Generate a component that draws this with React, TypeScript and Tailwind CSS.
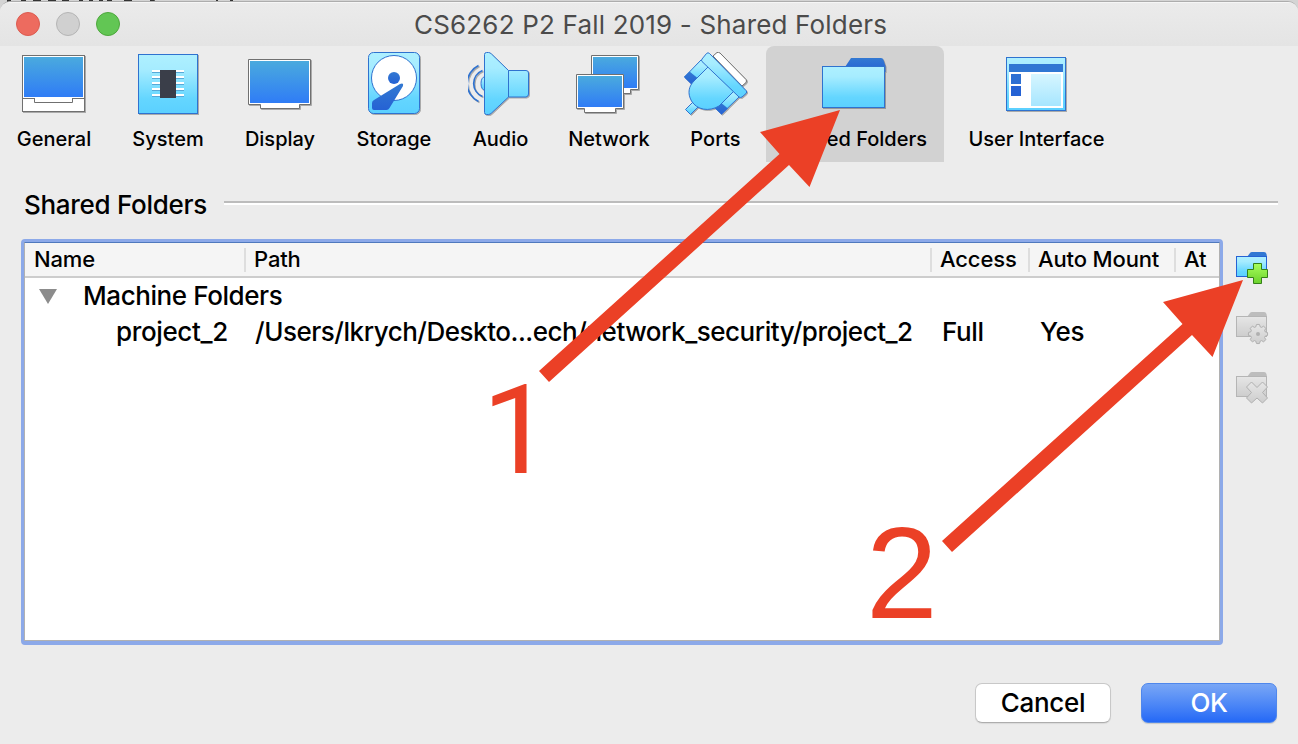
import React from "react";

type P = { children?: React.ReactNode };

const Defs = () => (
  <svg className="absolute h-0 w-0">
    <defs>
      <linearGradient id="screen" x1="0" y1="0" x2="0" y2="1">
        <stop offset="0" stopColor="#4aaade" />
        <stop offset="1" stopColor="#2f7cf6" />
      </linearGradient>
      <linearGradient id="cyan" x1="0" y1="0" x2="0" y2="1">
        <stop offset="0" stopColor="#aef0ff" />
        <stop offset="0.25" stopColor="#a6ecff" />
        <stop offset="0.75" stopColor="#64d6ff" />
        <stop offset="1" stopColor="#5bd0ff" />
      </linearGradient>
      <linearGradient id="blue" x1="0" y1="0" x2="0" y2="1">
        <stop offset="0" stopColor="#3379d2" />
        <stop offset="1" stopColor="#2562d4" />
      </linearGradient>
      <linearGradient id="pale" x1="0" y1="0" x2="0" y2="1">
        <stop offset="0" stopColor="#d6f6ff" />
        <stop offset="1" stopColor="#a6e6ff" />
      </linearGradient>
      <linearGradient id="green" x1="0" y1="0" x2="0" y2="1">
        <stop offset="0" stopColor="#a8ff5c" />
        <stop offset="1" stopColor="#6bd12c" />
      </linearGradient>
      <linearGradient id="gray" x1="0" y1="0" x2="0" y2="1">
        <stop offset="0" stopColor="#e6e6e6" />
        <stop offset="1" stopColor="#cdcdcd" />
      </linearGradient>
    </defs>
  </svg>
);

const Icon = ({ children, left }: P & { left?: boolean }) => (
  <svg
    width="66"
    height="66"
    viewBox="0 0 66 66"
    className={`shrink-0 drop-shadow-[1px_1px_0_rgba(0,0,0,0.28)] ${left ? "mr-0" : "-mr-0.5"}`}
  >
    {children}
  </svg>
);

const General = () => (
  <Icon>
    <rect x="0.5" y="3.5" width="62" height="56" fill="#fff" stroke="#707070" />
    <rect x="2" y="5" width="59" height="40" fill="url(#screen)" />
    <path d="M0.5 46.5h62M12.5 46.5v4h38v-4" fill="none" stroke="#707070" />
    <path d="M13 46.5h37" stroke="#fff" />
  </Icon>
);
const System = () => (
  <Icon>
    <rect x="2.5" y="2.5" width="59" height="59" fill="url(#cyan)" stroke="#2f72cf" />
    {[18, 24, 30, 36, 42].map((y) => (
      <g key={y}>
        <rect x="16" y={y} width="32" height="2" fill="#fff" />
        <rect x="16" y={y + 2} width="32" height="1" fill="#57a9d8" />
      </g>
    ))}
    <rect x="24" y="18" width="16" height="28" fill="#3a3e49" />
  </Icon>
);
const Display = () => (
  <Icon>
    <path d="M0.5 7.5h62v45h-11v4h-39v-4h-12z" fill="#fff" stroke="#707070" />
    <rect x="2" y="9" width="59" height="42" fill="url(#screen)" />
  </Icon>
);
const Storage = () => (
  <Icon>
    <rect x="6.5" y="0.5" width="51" height="61" rx="5" fill="url(#cyan)" stroke="#2f72cf" />
    <circle cx="32" cy="26" r="22.5" fill="#fff" stroke="#2f72cf" />
    <circle cx="32" cy="26" r="6" fill="url(#blue)" />
    <path d="M38 32q4-1.500 3 2L27.500 56q-1 2-3 2H12q-2 0-2-2v-5q0-2 2-3z" fill="url(#blue)" />
  </Icon>
);
const Audio = () => (
  <Icon left>
    <path d="M10.500 13.500a20 20 0 0 0 0 36M14.500 18.500a14 14 0 0 0 0 26" fill="none" stroke="#2f72cf" strokeWidth="1.700" />
    <path d="M17 24.500q-4 1-4 7t4 7" fill="url(#cyan)" stroke="#2f72cf" />
    <path d="M16.500 2.500q0-2 2-2h2q1.500 0 3 1.500L40.500 18.500H58q2.500 0 2.500 2.500v21q0 2.500-2.500 3H40.500L23.500 61q-1.500 1.500-3 1.500h-2q-2 0-2-2z" fill="url(#cyan)" stroke="#2f72cf" />
    <path d="M40.500 18.500v26.500" stroke="#2f72cf" />
  </Icon>
);
const Network = () => (
  <Icon left>
    <path d="M15.500 3.500h47v34h-8v4H23v-4h-7.500z" fill="#fff" stroke="#707070" />
    <rect x="17" y="5" width="44" height="31" fill="url(#screen)" />
    <path d="M0.500 22.500h47v34h-8v4h-31v-4h-8z" fill="#fff" stroke="#707070" />
    <rect x="2" y="24" width="44" height="31" fill="url(#screen)" />
  </Icon>
);
const Ports = () => (
  <Icon>
    <path d="M29 4l4-3.500q1.500-.500 3 .500L62 27.500q1 1.500 0 3L58 34z" fill="#fff" stroke="#707070" />
    <path d="M1.500 57.500l8-8 5 5-8 8z" fill="url(#cyan)" stroke="#2f72cf" />
    <path d="M0.500 25L17 8l9 7-17 18z" fill="url(#cyan)" stroke="#2f72cf" />
    <path d="M0 25l5.500-5.500 8 6.500-6 6.500z" fill="url(#blue)" />
    <path d="M30 55l18-18 7 8-17.500 17z" fill="url(#cyan)" stroke="#2f72cf" />
    <path d="M30 55l6-5 8 6.500-6.500 6z" fill="url(#blue)" />
    <path d="M24.500 14.500L49.500 39.500 35 54C25 60 13 58 7.500 49 3 41 5 34 10 29z" fill="url(#cyan)" stroke="#2f72cf" />
    <path d="M18 7l4.500-5.500q1.500-1.500 3 0L62 38.500q1.500 1.500 0 3L58 45q-1.500 1-3 0L18 9.500q-1-1 0-2.500z" fill="url(#cyan)" stroke="#2f72cf" />
  </Icon>
);
const Shared = () => (
  <Icon left>
    <path d="M23 15l6-9h30q2 0 2.500 2l2 6v6z" fill="url(#blue)" />
    <rect x="0.500" y="14.500" width="62" height="41" fill="url(#cyan)" stroke="#2f72cf" />
  </Icon>
);
const UserInterface = () => (
  <Icon left>
    <rect x="2.500" y="5.500" width="59" height="53" fill="url(#cyan)" stroke="#2f72cf" />
    <rect x="5" y="20" width="54" height="36" fill="#fff" />
    <rect x="5" y="12" width="54" height="8" fill="#3077d3" />
    <rect x="7" y="22" width="10" height="10" fill="#2d6fd3" />
    <rect x="7" y="34" width="10" height="10" fill="#2562d4" />
    <rect x="27" y="22" width="30" height="32" fill="url(#pale)" />
  </Icon>
);

const tools = [
  { label: "General", icon: <General />, box: "w-[106px]" },
  { label: "System", icon: <System />, box: "w-[104px]" },
  { label: "Display", icon: <Display />, box: "w-[102px]" },
  { label: "Storage", icon: <Storage />, box: "w-[108px]" },
  { label: "Audio", icon: <Audio />, box: "w-[87px]" },
  { label: "Network", icon: <Network />, box: "w-[112px]" },
  { label: "Ports", icon: <Ports />, box: "w-[83px]" },
  { label: "Shared Folders", icon: <Shared />, box: "w-[178px] rounded-t-lg bg-[#d2d2d2]" },
  { label: "User Interface", icon: <UserInterface />, box: "w-[167px]" },
];

const SmallFolder = ({ on, children }: P & { on?: boolean }) => (
  <svg width="34" height="34" viewBox="0 0 34 34">
    <path d="M11 5l3-4q.500-1 2-1h12q2 0 2.500 2l.500 3v3H11z" fill={on ? "#3178d3" : "#bdbdbd"} />
    <rect x="0.500" y="4.500" width="30" height="20" fill={on ? "url(#cyan)" : "url(#gray)"} stroke={on ? "#2562d4" : "#b5b5b5"} />
    {children}
  </svg>
);

const gearPath = Array.from({ length: 40 }, (_, i) => {
  const a = (i / 40) * Math.PI * 2;
  const r = i % 5 === 0 || i % 5 === 1 || i % 5 === 4 ? 9.6 : 7.4;
  return `${i ? "L" : "M"}${22 + r * Math.cos(a)} ${22 + r * Math.sin(a)}`;
}).join("") + "Z";

export default function App() {
  return (
    <div className="relative h-[744px] w-[1298px] overflow-hidden bg-[#d4d4d4] pt-px font-['Inter','Liberation_Sans',sans-serif] text-black">
      <Defs />
      <svg className="absolute left-0 top-0" width="290" height="3">
        <path d="M7 0h4v2H7zM21 0h5v2h-5zM33 0h8v2h-8zM48 0h8v2h-8zM62 0h7v2h-7zM79 0h4v2h-4zM89 0h4v2h-4zM99 0h4v2h-4zM107 0h5v2h-5zM124 0h8v1h-3v1h-5zM150 0h5l-1 2h-4zM216 0h2v1h-2zM230 0h3v1h-3z" fill="#333" />
      </svg>
      <div className="relative flex h-[743px] flex-col overflow-hidden rounded-t-[10px] border-t border-[#adadad] bg-[#ececec]">
        <header className="flex h-11 shrink-0 items-center border-t border-[#f6f6f6] bg-linear-to-b from-[#ebebeb] to-[#e4e4e4] pl-4">
          <div className="-mt-px flex gap-4">
            <i className="size-6 rounded-full border border-[#dc5b50] bg-[#ed6b5f]" />
            <i className="size-6 rounded-full border border-[#b5b5b5] bg-[#d0d0d0]" />
            <i className="size-6 rounded-full border border-[#4da73c] bg-[#62c654]" />
          </div>
          <h1 className="ml-[294px] whitespace-nowrap text-[26px] leading-8 tracking-[0.18px] text-[#4b4b4b]">CS6262 P2 Fall 2019 - Shared Folders</h1>
        </header>
        <nav className="flex h-[116px] shrink-0 gap-[9px] pl-px">
          {tools.map((t) => (
            <div key={t.label} className={`flex shrink-0 flex-col items-center pt-1.5 ${t.box}`}>
              {t.icon}
              <span className="mt-[9px] whitespace-nowrap text-[20px] font-[540] leading-6">{t.label}</span>
            </div>
          ))}
        </nav>
        <div className="mt-[23px] flex h-10 shrink-0 items-center pl-6 pr-5">
          <h2 className="w-[200px] whitespace-nowrap text-[26px] font-[450] leading-8 tracking-[-0.3px]">Shared Folders</h2>
          <div className="-mt-1 h-1 flex-1 border-b-2 border-t-2 border-b-white border-t-[#bcbcbc]" />
        </div>
        <main className="mt-[14px] flex h-[406px] shrink-0 pl-[21px]">
          <section className="w-[1202px] shrink-0 rounded-[4px] border-[3px] border-b-4 border-[#8ca9e9] bg-white">
            <div className="h-full border border-[#b1b1b1] border-t-[#4f79bd]">
              <div className="flex h-[35px] items-center border-b-2 border-[#cdcdcd] bg-[#f5f5f5] text-[22px] font-[450] leading-6 tracking-[-0.14px]">
                <div className="w-[219px] whitespace-nowrap pb-0.5 pl-[9px]">Name</div>
                <div className="flex h-6 w-[686px] items-center border-l-2 border-[#dedede] pb-0.5 pl-2">Path</div>
                <div className="flex h-6 w-[98px] items-center border-l-2 border-[#dedede] pb-0.5 pl-2">Access</div>
                <div className="flex h-6 w-[146px] items-center whitespace-nowrap border-l-2 border-[#dedede] pb-0.5 pl-2">Auto Mount</div>
                <div className="flex h-6 items-center border-l-2 border-[#dedede] pb-0.5 pl-2">At</div>
              </div>
              <div className="flex h-9 items-center pl-[14px] text-[26px] font-[450] tracking-[-0.42px]">
                <svg width="18" height="15"><path d="M0 0h18L9 15z" fill="#8c8c8c" /></svg>
                <span className="-mt-px ml-[26px] whitespace-nowrap">Machine Folders</span>
              </div>
              <div className="flex h-9 items-center whitespace-nowrap pb-px text-[26px] font-[450] tracking-[-0.36px]">
                <span className="w-[230px] pl-[91px]">project_2</span>
                <span className="w-[687px] tracking-[-0.47px]">/Users/lkrych/Deskto...ech/network_security/project_2</span>
                <span className="w-[98px]">Full</span>
                <span>Yes</span>
              </div>
            </div>
          </section>
          <aside className="ml-[13px] mt-[13px] flex flex-col gap-[26px]">
            <SmallFolder on>
              <path d="M17.500 11.500h8v6h6v8h-6v6h-8v-6h-6v-8h6z" fill="url(#green)" stroke="#348017" />
            </SmallFolder>
            <SmallFolder>
              <path d={gearPath} fill="url(#gray)" stroke="#b0b0b0" />
              <circle cx="22" cy="22" r="2" fill="#b0b0b0" />
            </SmallFolder>
            <SmallFolder>
              <path d="M10.500 15l5-5 5.500 5.500 5.500-5.500 5 5-5 5.500 5 5.500-5 5-5.500-5-5.500 5-5-5 5-5.500z" fill="url(#gray)" stroke="#b0b0b0" />
            </SmallFolder>
          </aside>
        </main>
        <footer className="mt-[38px] flex justify-end gap-[30px] pr-[21px] text-[26px] font-[450] tracking-[-0.3px]">
          <button className="h-10 w-[136px] rounded-[7px] border border-[#c8c8c8] border-b-[#adadad] bg-white leading-9 shadow-[0_1px_1px_rgba(0,0,0,.08)]">Cancel</button>
          <button className="h-10 w-[136px] rounded-[7px] border border-[#4f87ec] bg-linear-to-b from-[#79a6f5] to-[#2468f6] leading-9 text-white shadow-[0_1px_1px_rgba(0,0,0,.15)]">OK</button>
        </footer>
      </div>
      <svg className="pointer-events-none absolute left-0 top-0" width="1298" height="744" fill="#eb4026">
        <path d="M840 110L760 132l19.500 22L539 371l10 11 240-217 20.500 22z" />
        <path d="M1243 280l-80 22 19.500 22L942 541l10 11 240-217 20.500 22z" />
      </svg>
      <span className="absolute left-[482px] top-[368px] font-[Roboto,sans-serif] text-[125px] leading-[125px] text-[#eb4026]">1</span>
      <span className="absolute left-[866px] top-[509px] font-['Liberation_Sans',Arial,sans-serif] text-[129px] leading-[129px] text-[#eb4026]">2</span>
    </div>
  );
}
